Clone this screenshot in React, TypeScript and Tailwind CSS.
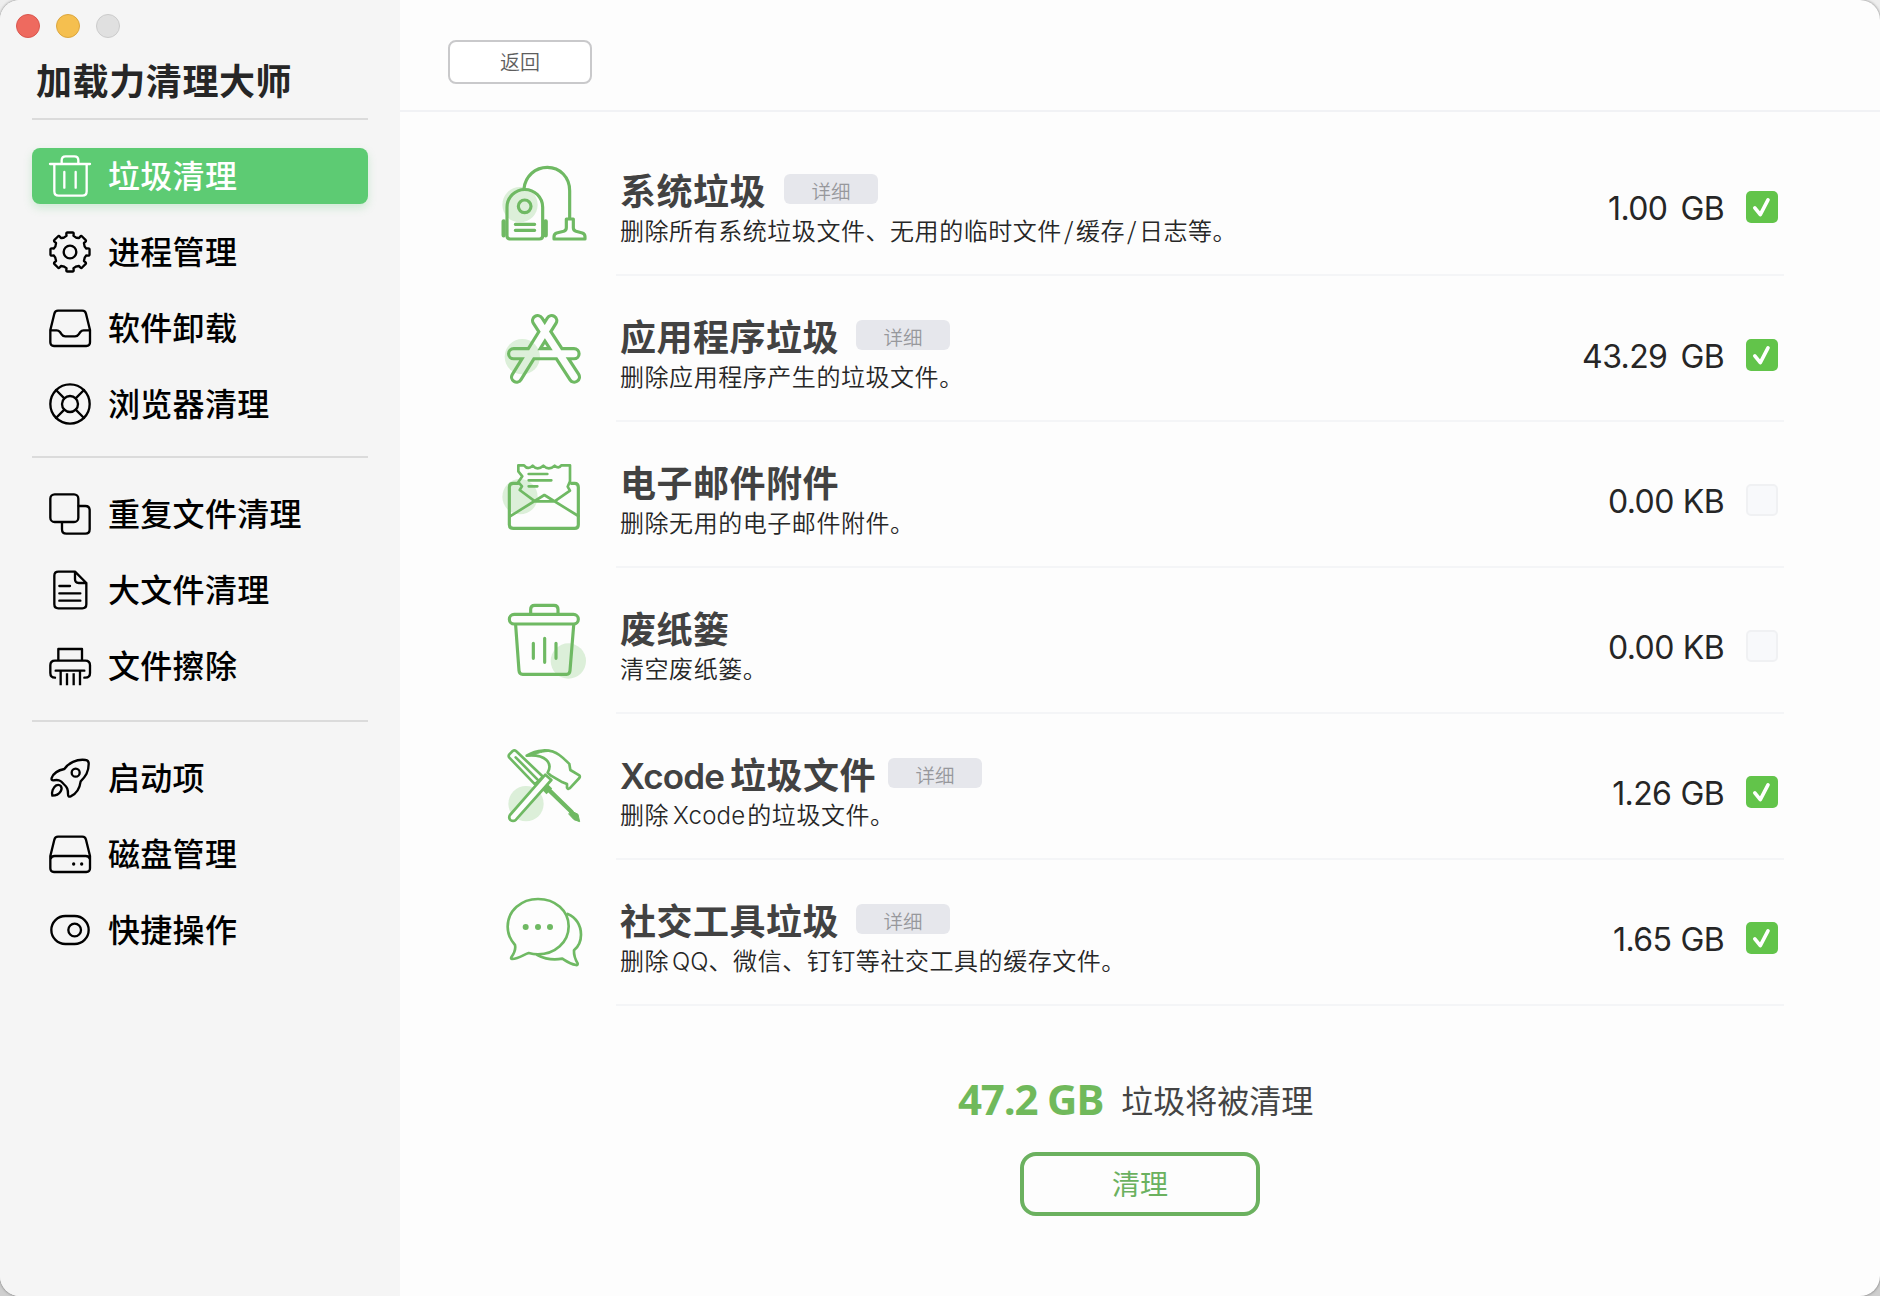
import React from "react";

const GREEN = "#6fb963";

type IconProps = { children: React.ReactNode };

function NavIcon({ children }: IconProps) {
  return (
    <svg
      viewBox="0 0 132 132"
      className="h-11 w-11 shrink-0"
      fill="none"
      stroke="currentColor"
      strokeWidth={7}
      strokeLinecap="round"
      strokeLinejoin="round"
    >
      {children}
    </svg>
  );
}

function FeatureIcon({ children }: IconProps) {
  return (
    <svg
      viewBox="0 0 288 300"
      className="mt-[30px] h-[100px] w-24 shrink-0"
      fill="none"
      stroke={GREEN}
      strokeWidth={9.5}
      strokeLinecap="round"
      strokeLinejoin="round"
    >
      {children}
    </svg>
  );
}

function Blob({ cx, cy }: { cx: number; cy: number }) {
  return <circle cx={cx} cy={cy} r={53} fill="#dcefd9" stroke="none" />;
}

function gearPath() {
  const pt = (r: number, deg: number) => {
    const a = (deg * Math.PI) / 180;
    return `${(66 + r * Math.sin(a)).toFixed(1)} ${(66 - r * Math.cos(a)).toFixed(1)}`;
  };
  let d = "";
  for (let i = 0; i < 8; i++) {
    const a = i * 45;
    d += `${i === 0 ? "M" : "L"}${pt(50, a - 12)} L${pt(55, a - 11.5)} Q${pt(60, a - 11)} ${pt(59, a - 7)} `;
    d += `L${pt(59, a + 7)} Q${pt(60, a + 11)} ${pt(55, a + 11.5)} L${pt(50, a + 12)} Q${pt(45, a + 22.5)} ${pt(50, a + 33)} `;
  }
  return d + "Z";
}

const icons = {
  trash: (
    <NavIcon>
      <path d="M6 30H126M41 29V19Q41 7 53 7H79Q91 7 91 19V29M19 31V112Q19 125 32 125H103Q116 125 116 112V31M49 54V101M83 54V101" />
    </NavIcon>
  ),
  gear: (
    <NavIcon>
      <path d={gearPath()} />
      <circle cx="66" cy="66" r="19" />
    </NavIcon>
  ),
  inbox: (
    <NavIcon>
      <path d="M7 72L19 23Q21 14 30 14H103Q112 14 114 23L126 72V109Q126 120 115 120H18Q7 120 7 109ZM7 73H26Q32 73 36 78L41 85Q45 91 52 91H81Q88 91 92 85L97 78Q101 73 107 73H126" />
    </NavIcon>
  ),
  lifebuoy: (
    <NavIcon>
      <circle cx="66" cy="66" r="59" />
      <circle cx="66" cy="66" r="24" />
      <path d="M24 24L49 49M108 24L83 49M24 108L49 83M108 108L83 83" />
    </NavIcon>
  ),
  copies: (
    <NavIcon>
      <rect x="7" y="7" width="84" height="83" rx="13" />
      <path d="M92 42H112Q125 42 125 55V112Q125 125 112 125H55Q42 125 42 112V91" />
    </NavIcon>
  ),
  doc: (
    <NavIcon>
      <path d="M81 11H31Q19 11 19 23V109Q19 121 31 121H103Q115 121 115 109V45ZM81 11V34Q81 45 92 45H115M34 54H66M34 76H97M34 98H97" />
    </NavIcon>
  ),
  shredder: (
    <NavIcon>
      <path d="M31 50V15H102V50M21 101Q7 101 7 87V64Q7 50 21 50H112Q126 50 126 64V87Q126 101 112 101H109M23 80H109" />
      <path strokeLinecap="butt" d="M38 80V124M57 88V124M77 88V124M96 80V124" />
    </NavIcon>
  ),
  rocket: (
    <NavIcon>
      <path d="M11 66C18 48 32 42 49 39C60 22 86 8 113 12Q121 13 122 21C123 48 112 62 98 76C95 98 84 114 68 121Q60 124 60 114C60 100 58 94 47 84C38 74 32 70 16 73Q9 73 11 66Z" />
      <circle cx="83" cy="50" r="12" />
      <path d="M13 119C10 108 15 94 25 88Q33 84 39 91Q43 98 38 106C33 114 24 119 13 119Z" />
    </NavIcon>
  ),
  disk: (
    <NavIcon>
      <path d="M7 72L19 23Q21 14 30 14H103Q112 14 114 23L126 72V109Q126 120 115 120H18Q7 120 7 109ZM8 80Q10 72 20 72H113Q123 72 125 80" />
      <circle cx="77" cy="96" r="5" fill="currentColor" stroke="none" />
      <circle cx="101" cy="96" r="5" fill="currentColor" stroke="none" />
    </NavIcon>
  ),
  toggle: (
    <NavIcon>
      <rect x="10" y="24" width="112" height="84" rx="42" />
      <circle cx="80" cy="66" r="19" />
    </NavIcon>
  ),
};

const featureIcons = {
  vacuum: (
    <FeatureIcon>
      <Blob cx={60} cy={134} />
      <path d="M21 227V142A53.5 53.5 0 0 1 128 142V227Q128 237 118 237H31Q21 237 21 227ZM46 193H104M46 211H104" />
      <circle cx="74" cy="139" r="19" />
      <path d="M11 184V226M137 184V226" strokeWidth={13} />
      <path d="M72 86C76 48 106 22 142 22C180 22 209 52 209 92V174" />
      <path d="M199 177H220V203Q220 211 228 214L247 219Q255 222 255 230V237H162V230Q162 222 170 219L191 214Q199 211 199 203Z" />
    </FeatureIcon>
  ),
  apps: (
    <FeatureIcon>
      <Blob cx={67} cy={152} />
      <mask id="apps-outline" maskUnits="userSpaceOnUse" x="0" y="0" width="288" height="300">
        <path d="M41 143H222M50 213L155 44M223 213L113 44" stroke="#fff" strokeWidth={40} />
        <path d="M41 143H222M50 213L155 44M223 213L113 44" stroke="#000" strokeWidth={21} />
      </mask>
      <rect width="288" height="300" fill={GREEN} stroke="none" mask="url(#apps-outline)" />
    </FeatureIcon>
  ),
  mail: (
    <FeatureIcon>
      <Blob cx={60} cy={134} />
      <path d="M55 94H40Q28 94 28 106V218Q28 229 40 229H224Q235 229 235 218V106Q235 94 224 94H214" />
      <path
        strokeWidth={8}
        d="M102 146L59 114L66 103L55 90L67 73L55 58V40L72 40Q84 55 98 41Q112 57 130 41Q146 57 164 41Q176 52 184 40H210V88L203 104L210 116L167 146"
      />
      <path strokeWidth={8} d="M30 193L133 129L235 192M100 148H168M86 66H142M86 85H154M86 103H112" />
    </FeatureIcon>
  ),
  bin: (
    <FeatureIcon>
      <Blob cx={205} cy={189} />
      <path d="M92 46V34Q92 22 104 22H162Q174 22 174 34V46M47 82L57 218Q58 229 68 229H200Q209 229 210 218L221 82M100 136V181M134 121V193M168 136V181" />
      <rect x="28" y="49" width="207" height="29" rx="14.5" />
    </FeatureIcon>
  ),
  tools: (
    <FeatureIcon>
      <Blob cx={78} cy={179} />
      <path strokeWidth={8} d="M28 41Q24 36 28 31L38 21Q43 17 48 21L129 98L105 121ZM47 40L112 106" />
      <path d="M134 128L148 142" strokeWidth={24} strokeLinecap="butt" />
      <path d="M145 136L215 204" strokeWidth={13} />
      <path d="M213 200L234 211L239 233L222 227L207 211Z" fill={GREEN} strokeWidth={3} />
      <path strokeWidth={8} d="M136 92L154 108L48 227Q40 234 31 228Q25 221 30 213Z" fill="#fdfdfd" />
      <path
        strokeWidth={8}
        d="M80 35C108 17 150 12 178 33C192 43 200 52 208 60L211 78L238 94Q241 98 238 102L209 133Q204 137 201 131V120L184 113L153 95L143 86C159 58 138 30 80 35Z"
      />
      <path d="M82 35C108 17 145 16 160 22C138 22 118 24 100 34Z" fill={GREEN} strokeWidth={3} />
    </FeatureIcon>
  ),
  chat: (
    <FeatureIcon>
      <path
        strokeWidth={8}
        d="M45 165C30 148 23 130 23 110C23 62 64 27 114 27C166 27 206 62 206 109C206 157 165 193 114 193Q100 193 86 189C70 194 58 206 36 207Q32 207 34 202C44 188 48 178 45 165Z"
      />
      <path strokeWidth={8} d="M203 72C228 82 243 106 243 134Q243 163 222 181Q221 200 233 220Q234 226 228 225C208 222 198 213 187 206Q148 214 112 195" />
      <g fill={GREEN} stroke="none">
        <circle cx="77" cy="111" r="9" />
        <circle cx="114" cy="111" r="9" />
        <circle cx="150" cy="111" r="9" />
      </g>
    </FeatureIcon>
  ),
};

type NavEntry = { icon: keyof typeof icons; label: string; active?: boolean };

function NavGroup({ items }: { items: NavEntry[] }) {
  return (
    <ul className="flex flex-col gap-5">
      {items.map((item) => (
        <li
          key={item.label}
          className={
            item.active
              ? "flex h-14 items-center gap-4 rounded-lg bg-[#5dcb73] pl-4 text-white shadow-[0_4px_8px_rgba(93,203,115,0.25)]"
              : "flex h-14 items-center gap-4 pl-4 text-black"
          }
        >
          {icons[item.icon]}
          <span className="pb-[3px] text-[32px] font-medium leading-[53px] tracking-[0.3px]">{item.label}</span>
        </li>
      ))}
    </ul>
  );
}

type Row = {
  icon: keyof typeof featureIcons;
  title: string;
  desc: React.ReactNode;
  detail?: string;
  amount: string;
  unit: string;
  unitGap: string;
  rightTop: string;
  checked: boolean;
};

const slash = <span className="mx-[2px]">/</span>;

const rows: Row[] = [
  { icon: "vacuum", title: "系统垃圾", desc: <>删除所有系统垃圾文件、无用的临时文件{slash}缓存{slash}日志等。</>, detail: "ml-[18px]", amount: "1.00", unit: "GB", unitGap: "gap-[13px]", rightTop: "pt-[61px]", checked: true },
  { icon: "apps", title: "应用程序垃圾", desc: "删除应用程序产生的垃圾文件。", detail: "ml-[17px]", amount: "43.29", unit: "GB", unitGap: "gap-[13px]", rightTop: "pt-[63px]", checked: true },
  { icon: "mail", title: "电子邮件附件", desc: "删除无用的电子邮件附件。", amount: "0.00", unit: "KB", unitGap: "gap-[9px]", rightTop: "pt-[62px]", checked: false },
  { icon: "bin", title: "废纸篓", desc: "清空废纸篓。", amount: "0.00", unit: "KB", unitGap: "gap-[9px]", rightTop: "pt-[62px]", checked: false },
  { icon: "tools", title: "垃圾文件", desc: <>删除<span className="ml-1 mr-0.5 font-['Inter'] tracking-[0.2px]">Xcode</span>的垃圾文件。</>, detail: "ml-[12px]", amount: "1.26", unit: "GB", unitGap: "gap-[9px]", rightTop: "pt-[62px]", checked: true },
  { icon: "chat", title: "社交工具垃圾", desc: <>删除<span className="ml-[3px] font-['Inter'] tracking-[0px]">QQ</span>、微信、钉钉等社交工具的缓存文件。</>, detail: "ml-[17px]", amount: "1.65", unit: "GB", unitGap: "gap-[9px]", rightTop: "pt-[62px]", checked: true },
];

function Checkbox({ checked }: { checked: boolean }) {
  if (!checked) return <span className="h-8 w-8 rounded-[5px] border-2 border-[#f0f1f3] bg-[#f8f9fb]" />;
  return (
    <span className="flex h-8 w-8 items-center justify-center rounded-[5px] bg-[#62c44a]">
      <svg viewBox="0 0 32 32" className="h-8 w-8" fill="none" stroke="#fff" strokeWidth={3.6} strokeLinecap="round" strokeLinejoin="round">
        <path d="M8.8 16.8L14.3 23.6L22 8.8" />
      </svg>
    </span>
  );
}

function JunkRow({ row }: { row: Row }) {
  return (
    <li className="flex h-[146px]">
      {featureIcons[row.icon]}
      <div className="ml-5 flex flex-1 border-b-2 border-[#f4f5f7]">
        <div className="pl-1 pt-9">
          <div className="flex h-[46px] items-start">
            <h2 className="whitespace-nowrap text-[36px] font-bold leading-[46px] tracking-[0.5px] text-[#424242]">
              {row.icon === "tools" && <span className="mr-1.5 font-['Inter'] text-[35px] font-semibold tracking-[-0.9px]">Xcode</span>}
              {row.title}
            </h2>
            {row.detail && (
              <span className={row.detail}>
                <span className="mt-2 flex h-[30px] w-[94px] items-center justify-center rounded-md bg-[#e6e7ec] pt-[3px] text-[19.5px] font-[350] leading-none text-[#97989c]">
                  详细
                </span>
              </span>
            )}
          </div>
          <p className="whitespace-nowrap text-[24px] font-[350] leading-9 tracking-[0.55px] text-[#262626]">{row.desc}</p>
        </div>
        <div className={row.rightTop + " ml-auto flex items-start gap-[22px] pr-[6px]"}>
          <span className={row.unitGap + " flex pt-[1.5px] font-['Inter'] text-[32px] font-[430] leading-8 tracking-[-0.6px] text-[#262626]"}>
            <span>{row.amount}</span>
            <span>{row.unit}</span>
          </span>
          <Checkbox checked={row.checked} />
        </div>
      </div>
    </li>
  );
}

export default function App() {
  return (
    <div className="h-[1296px] w-[1880px] overflow-hidden bg-linear-to-b from-[#eeeeee] to-[#cfcfcf]">
      <div className="flex h-full w-full overflow-hidden rounded-[20px] bg-[#fdfdfd] font-['Noto_Sans_CJK_SC',sans-serif] shadow-[0_0_3px_rgba(0,0,0,0.5)]">
        <aside className="w-[400px] shrink-0 bg-[#f5f5f5] px-8">
          <div className="-ml-4 flex gap-4 pt-[14px]">
            <span className="h-6 w-6 rounded-full border border-[#d9574f] bg-[#ee6a5f]" />
            <span className="h-6 w-6 rounded-full border border-[#dba63f] bg-[#f5bf4f]" />
            <span className="h-6 w-6 rounded-full border border-[#cbcbcb] bg-[#e0e0e0]" />
          </div>
          <h1 className="mt-[14px] h-[66px] whitespace-nowrap pl-1 text-[36px] font-bold leading-[54px] tracking-[0.6px] text-[#262626]">加载力清理大师</h1>
          <nav>
            <div className="mb-7 h-0.5 bg-[#dbdbdb]" />
            <NavGroup
              items={[
                { icon: "trash", label: "垃圾清理", active: true },
                { icon: "gear", label: "进程管理" },
                { icon: "inbox", label: "软件卸载" },
                { icon: "lifebuoy", label: "浏览器清理" },
              ]}
            />
            <div className="mb-7 mt-6 h-0.5 bg-[#dbdbdb]" />
            <NavGroup
              items={[
                { icon: "copies", label: "重复文件清理" },
                { icon: "doc", label: "大文件清理" },
                { icon: "shredder", label: "文件擦除" },
              ]}
            />
            <div className="mb-7 mt-[26px] h-0.5 bg-[#dbdbdb]" />
            <NavGroup
              items={[
                { icon: "rocket", label: "启动项" },
                { icon: "disk", label: "磁盘管理" },
                { icon: "toggle", label: "快捷操作" },
              ]}
            />
          </nav>
        </aside>
        <main className="flex flex-1 flex-col">
          <header className="h-28 border-b-2 border-[#f1f2f5] pl-12 pt-10">
            <button className="flex h-11 w-36 items-center justify-center rounded-lg border-2 border-[#c9c9cb] bg-white text-[20px] font-[350] text-[#5e5e5e]">返回</button>
          </header>
          <ul className="pl-[100px] pr-24 pt-[18px]">
            {rows.map((row) => (
              <JunkRow key={row.icon} row={row} />
            ))}
          </ul>
          <div className="mt-[68px] flex h-[50px] items-center pl-[558px]">
            <span className="font-['Open_Sans'] text-[42px] font-bold leading-[50px] tracking-[-1.2px] text-[#70b95b]">47.2 GB</span>
            <span className="ml-[18px] text-[32px] leading-[50px] text-[#444]">垃圾将被清理</span>
          </div>
          <button className="ml-[620px] mt-7 flex h-16 w-60 items-center justify-center rounded-2xl border-4 border-[#6bb15f] pb-0.5 text-[28px] text-[#6bb15f]">清理</button>
        </main>
      </div>
    </div>
  );
}
